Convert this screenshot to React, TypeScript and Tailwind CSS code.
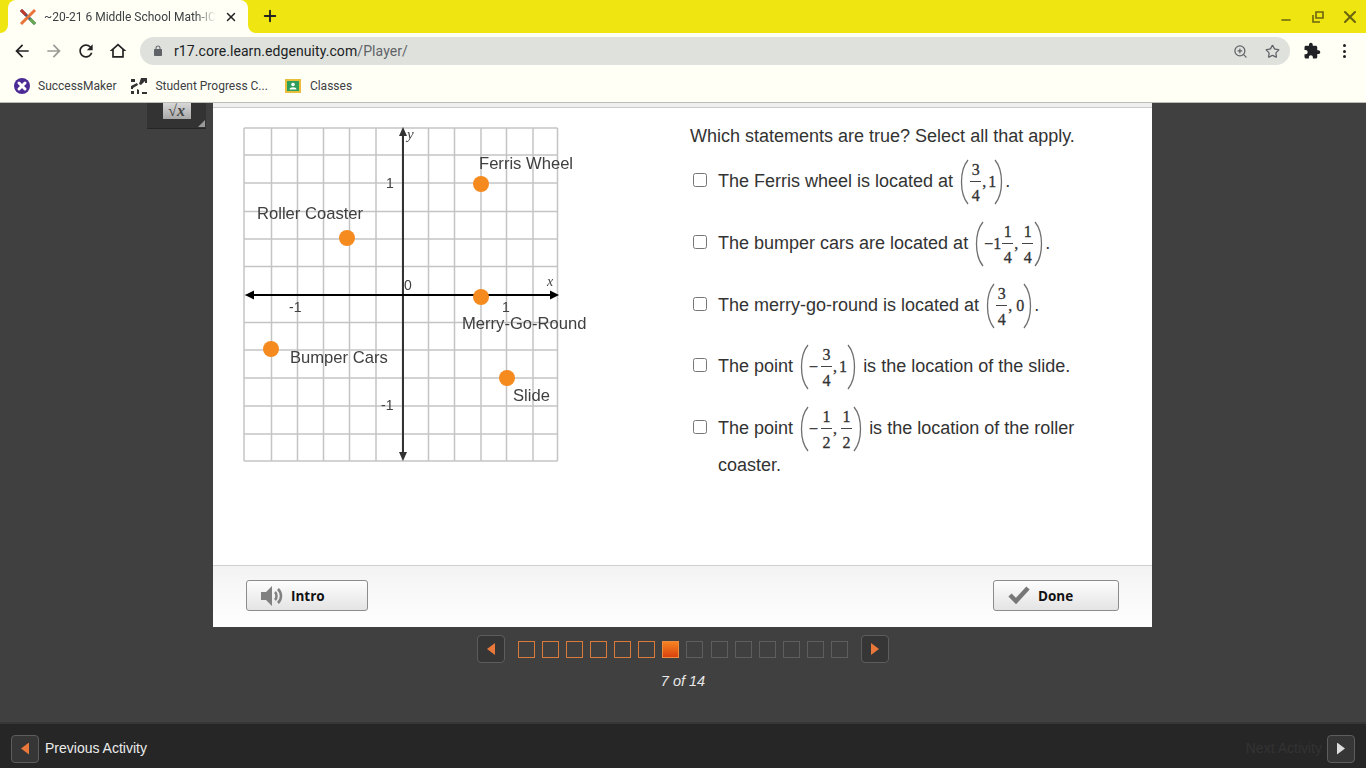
import { Minus, Plus, Star, X, ZoomIn } from 'lucide-react'
import type { ReactNode } from 'react'

const gridX = [244, 271.5, 297.5, 323.5, 349.5, 376, 402.5, 428.5, 454.5, 481, 506.5, 533, 557.5]
const gridY = [128, 155, 183, 211.5, 239, 266.5, 295, 322.5, 350, 378, 406, 434, 461]
const points = [
  [481, 184],
  [347, 238],
  [481, 297],
  [271, 349],
  [507, 378],
]
const labels = [
  { text: 'Ferris Wheel', x: 479, y: 169 },
  { text: 'Roller Coaster', x: 257, y: 219 },
  { text: 'Merry-Go-Round', x: 462, y: 329 },
  { text: 'Bumper Cars', x: 290, y: 363 },
  { text: 'Slide', x: 513, y: 401 },
]
const ticks = [
  { text: '1', x: 386, y: 188 },
  { text: '-1', x: 289, y: 312 },
  { text: '0', x: 404, y: 290 },
  { text: '1', x: 502, y: 312 },
  { text: '-1', x: 381, y: 410 },
]

function Graph() {
  return (
    <svg width="360" height="355" viewBox="235 115 360 355" className="shrink-0 blur-[0.3px]">
      {gridX.map((x) => (
        <line key={x} x1={x} y1="128" x2={x} y2="461" stroke="#c4c4c4" strokeWidth="1.5" />
      ))}
      {gridY.map((y) => (
        <line key={y} x1="244" y1={y} x2="557.5" y2={y} stroke="#c4c4c4" strokeWidth="1.5" />
      ))}
      <line x1="403" y1="132" x2="403" y2="456" stroke="#333" strokeWidth="2" />
      <path d="M403 127l-4 9h8zM403 461l-4-9h8z" fill="#333" />
      <line x1="250" y1="295" x2="554" y2="295" stroke="#000" strokeWidth="2" />
      <path d="M245 295l9-4.5v9zM559 295l-9-4.5v9z" fill="#000" />
      {points.map(([cx, cy]) => (
        <circle key={`${cx}-${cy}`} cx={cx} cy={cy} r="8" fill="#f58a1f" />
      ))}
      {labels.map((l) => (
        <text key={l.text} x={l.x} y={l.y} fontSize="16.6" fill="#404040" fontFamily="'Liberation Sans', sans-serif">
          {l.text}
        </text>
      ))}
      {ticks.map((t) => (
        <text key={`${t.x}-${t.y}`} x={t.x} y={t.y} fontSize="14" fill="#404040" fontFamily="'Liberation Sans', sans-serif">
          {t.text}
        </text>
      ))}
      <text x="547" y="286" fontSize="14" fontStyle="italic" fill="#444" fontFamily="'Liberation Serif', serif">x</text>
      <text x="407" y="139" fontSize="15" fontStyle="italic" fill="#444" fontFamily="'Liberation Serif', serif">y</text>
    </svg>
  )
}

function Paren({ right }: { right?: boolean }) {
  return (
    <svg width="9" height="46" viewBox="0 0 9 46" className={right ? 'shrink-0 -scale-x-100' : 'shrink-0'}>
      <path d="M8 1C3 7 1.5 15 1.5 23S3 39 8 45" fill="none" stroke="#6f6f6f" strokeWidth="1.3" />
    </svg>
  )
}

function Frac({ top, bottom, className }: { top: string; bottom: string; className?: string }) {
  return (
    <span className={`inline-flex w-[13px] flex-col items-center ${className ?? ''}`}>
      <span className="h-[22px] leading-[22px]">{top}</span>
      <span className="h-px w-[11px] bg-[#444]" />
      <span className="h-[23px] leading-[27px]">{bottom}</span>
    </span>
  )
}

function Expr({ children }: { children: ReactNode }) {
  return (
    <span className="ml-[2px] mr-[2px] inline-flex h-[46px] items-center align-middle font-['Liberation_Serif',serif] text-[16px] leading-none text-[#333] [-webkit-text-stroke:0.3px_#333]">
      <Paren />
      {children}
      <Paren right />
    </span>
  )
}

function Row({ children }: { children: ReactNode }) {
  return (
    <div className="mb-[15.75px] flex items-start">
      <input type="checkbox" className="ml-[3px] mr-[11px] mt-[14px] h-[14px] w-[14px] shrink-0" />
      <p className="w-[385px] text-[18px] leading-[27px] text-[#333]">{children}</p>
    </div>
  )
}

function ChromeIcon({ d, className }: { d: string; className?: string }) {
  return (
    <svg viewBox="0 0 24 24" className={className} fill="currentColor">
      <path d={d} />
    </svg>
  )
}

function NavButton({ dir, dim }: { dir: 'left' | 'right'; dim?: boolean }) {
  return (
    <button className="flex h-[28px] w-[28px] shrink-0 items-center justify-center rounded-[4px] border border-[#5d5d5d] bg-[#363636]">
      {dir === 'left' ? (
        <span className={`h-[12px] w-[8px] [clip-path:polygon(100%_0,100%_100%,0_50%)] ${dim ? 'bg-[#ddd]' : 'bg-[#e9783a]'}`} />
      ) : (
        <span className={`h-[12px] w-[8px] [clip-path:polygon(0_0,100%_50%,0_100%)] ${dim ? 'bg-[#ddd]' : 'bg-[#e9783a]'}`} />
      )}
    </button>
  )
}

function PageDot({ index }: { index: number }) {
  if (index === 6) {
    return <span className="h-[17px] w-[17px] shrink-0 border border-[#f08a3c] bg-gradient-to-b from-[#f58220] to-[#d9400f]" />
  }
  if (index < 6) {
    return <span className="h-[17px] w-[17px] shrink-0 border border-[#d9793a]" />
  }
  return <span className="h-[17px] w-[17px] shrink-0 border border-[#5e5e5e]" />
}

export default function App() {
  return (
    <div className="flex h-[768px] w-[1366px] flex-col overflow-hidden bg-[#404040] font-['Liberation_Sans',sans-serif]">
      {/* tab strip */}
      <div className="flex h-[33px] shrink-0 items-end bg-[#eee511] pl-[8px] font-['Roboto',sans-serif]">
        <div className="relative flex h-[33px] w-[240px] items-center rounded-t-[8px] bg-[#fffff6] pl-[11px] pr-[8px]">
          <span className="absolute -left-[8px] bottom-0 h-[8px] w-[8px] bg-[#fffff6]">
            <span className="block h-full w-full rounded-br-[8px] bg-[#eee511]" />
          </span>
          <span className="absolute -right-[8px] bottom-0 h-[8px] w-[8px] bg-[#fffff6]">
            <span className="block h-full w-full rounded-bl-[8px] bg-[#eee511]" />
          </span>
          <svg width="18" height="18" viewBox="0 0 18 18" className="shrink-0">
            <path d="M2 2l14 14" stroke="#2f5d8c" strokeWidth="3" />
            <path d="M16 2L2 16" stroke="#e8743b" strokeWidth="3" />
            <path d="M2 2l5 5" stroke="#c0392b" strokeWidth="3" />
            <path d="M16 16l-5-5" stroke="#6aa84f" strokeWidth="3" />
          </svg>
          <span className="ml-[7px] w-[172px] overflow-hidden whitespace-nowrap text-[12px] text-[#3c4043] [mask-image:linear-gradient(to_right,black_88%,transparent)]">~20-21 6 Middle School Math-IC</span>
          <X className="ml-[8px] h-[14px] w-[14px] shrink-0 text-[#222]" strokeWidth={2.5} />
        </div>
        <Plus className="mb-[8px] ml-[13px] h-[18px] w-[18px] text-[#222]" strokeWidth={2.5} />
        <div className="mb-[6px] ml-auto flex items-center text-[#6b650f]">
          <Minus className="mt-[5px] h-[14px] w-[14px]" strokeWidth={2.5} />
          <svg width="12" height="12" viewBox="0 0 12 12" className="ml-[19px]" fill="none" stroke="currentColor" strokeWidth="1.6">
            <path d="M4 1h7v6H4zM1 4v7h7" />
          </svg>
          <X className="ml-[16px] mr-[6px] h-[20px] w-[20px]" strokeWidth={2.5} />
        </div>
      </div>

      {/* toolbar */}
      <div className="flex h-[37px] shrink-0 items-center bg-[#fffff6] pb-[1px] pl-[6px] font-['Roboto',sans-serif] text-[#222]">
        <div className="flex w-[32px] justify-center">
          <ChromeIcon className="h-[20px] w-[20px]" d="M20 11H7.83l5.59-5.59L12 4l-8 8 8 8 1.41-1.41L7.83 13H20v-2z" />
        </div>
        <div className="flex w-[32px] justify-center text-[#9a9a96]">
          <ChromeIcon className="h-[20px] w-[20px]" d="M12 4l-1.41 1.41L16.17 11H4v2h12.17l-5.58 5.59L12 20l8-8z" />
        </div>
        <div className="flex w-[32px] justify-center">
          <ChromeIcon className="h-[20px] w-[20px]" d="M17.65 6.35C16.2 4.9 14.21 4 12 4c-4.42 0-7.99 3.58-7.99 8s3.57 8 7.99 8c3.73 0 6.84-2.55 7.73-6h-2.08c-.82 2.33-3.04 4-5.65 4-3.31 0-6-2.69-6-6s2.69-6 6-6c1.66 0 3.14.69 4.22 1.78L13 11h7V4l-2.35 2.35z" />
        </div>
        <div className="flex w-[32px] justify-center">
          <ChromeIcon className="h-[20px] w-[20px]" d="M12 3L2 12h3v8h14v-8h3L12 3zm0 2.69l5 4.5V18H7v-7.81l5-4.5z" />
        </div>
        <div className="ml-[6px] flex h-[28px] w-[1150px] items-center rounded-full bg-[#dfe1dc] pl-[12px] pr-[10px]">
          <ChromeIcon className="h-[12px] w-[12px] text-[#5f6368]" d="M18 8h-1V6c0-2.76-2.24-5-5-5S7 3.24 7 6v2H6c-1.1 0-2 .9-2 2v10c0 1.1.9 2 2 2h12c1.1 0 2-.9 2-2V10c0-1.1-.9-2-2-2zM9 6c0-1.66 1.34-3 3-3s3 1.34 3 3v2H9V6z" />
          <span className="ml-[10px] text-[14px] tracking-[0.08px] text-[#202124]">
            r17.core.learn.edgenuity.com<span className="text-[#5f6368]">/Player/</span>
          </span>
          <ZoomIn className="ml-auto h-[15px] w-[15px] text-[#5f6368]" />
          <Star className="ml-[17px] h-[15px] w-[15px] text-[#5f6368]" />
        </div>
        <ChromeIcon className="ml-[13px] h-[18px] w-[18px] text-[#202124]" d="M20.5 11H19V7c0-1.1-.9-2-2-2h-4V3.5C13 2.12 11.88 1 10.5 1S8 2.12 8 3.5V5H4c-1.1 0-1.99.9-1.99 2v3.8H3.5c1.49 0 2.7 1.21 2.7 2.7s-1.21 2.7-2.7 2.7H2V20c0 1.1.9 2 2 2h3.8v-1.5c0-1.49 1.21-2.7 2.7-2.7 1.49 0 2.7 1.21 2.7 2.7V22H17c1.1 0 2-.9 2-2v-4h1.5c1.38 0 2.5-1.12 2.5-2.5S21.88 11 20.5 11z" />
        <div className="ml-[22px] flex flex-col gap-[2.5px]">
          <span className="h-[3px] w-[3px] rounded-full bg-[#202124]" />
          <span className="h-[3px] w-[3px] rounded-full bg-[#202124]" />
          <span className="h-[3px] w-[3px] rounded-full bg-[#202124]" />
        </div>
      </div>

      {/* bookmarks */}
      <div className="flex h-[33px] shrink-0 items-center border-b border-[#bdbdb8] bg-[#fffff6] pl-[14px] font-['Roboto',sans-serif] text-[12px] text-[#3c4043]">
        <svg width="16" height="16" viewBox="0 0 16 16" className="shrink-0">
          <circle cx="8" cy="8" r="8" fill="#4b2a96" />
          <path d="M5 5l6 6M11 5l-6 6" stroke="#fff" strokeWidth="3" strokeLinecap="round" />
        </svg>
        <span className="ml-[8px]">SuccessMaker</span>
        <svg width="16" height="16" viewBox="0 0 16 16" className="ml-[15px] shrink-0" fill="#333">
          <path d="M0 1h4v3H0zM10 0h6v5h-2V3l-4 4-2-1zM0 8l6-3 1 2-5 3v1H0zM0 13h3v3H0zM6 11l2 1v4H6zM11 14h5v2h-5z" />
        </svg>
        <span className="ml-[8px]">Student Progress C...</span>
        <svg width="16" height="16" viewBox="0 0 16 16" className="ml-[17px] shrink-0">
          <rect width="16" height="14" y="1" fill="#e8bf3a" />
          <rect width="12" height="10" x="2" y="3" fill="#2e9e5b" />
          <circle cx="8" cy="6.5" r="1.8" fill="#fff" />
          <path d="M4.5 11.5c0-3 7-3 7 0z" fill="#fff" />
        </svg>
        <span className="ml-[9px]">Classes</span>
      </div>

      {/* player */}
      <div className="relative flex min-h-0 flex-1 flex-col items-center">
        {/* calculator tool */}
        <div className="absolute left-[147px] top-0 flex h-[26px] w-[59px] justify-center border-b border-[#262626] bg-[#333]">
          <div className="flex h-[16px] w-[28px] items-center justify-center bg-gradient-to-b from-[#d8d8d8] to-[#a8a8a8] font-['Liberation_Serif',serif] text-[16px] font-bold italic leading-none text-[#444]">
            √x
          </div>
          <span className="absolute bottom-[1px] right-[1px] h-[7px] w-[7px] bg-[#999] [clip-path:polygon(100%_0,100%_100%,0_100%)]" />
        </div>

        <div className="ml-[213px] flex h-[524px] w-[939px] shrink-0 flex-col self-start bg-white">
          <div className="h-[5px] shrink-0 border-b border-[#c9c9c9] bg-[#efefef]" />
          <div className="flex min-h-0 flex-1 pl-[22px] pt-[7px]">
            <Graph />
            <div className="ml-[95px] flex flex-col pt-[3px]">
              <p className="mb-[5px] text-[18px] leading-[36px] text-[#333]">Which statements are true? Select all that apply.</p>
              <Row>
                The Ferris wheel is located at{' '}
                <Expr>
                  <Frac top="3" bottom="4" />
                  <span>,</span>
                  <span className="-mr-[2px] ml-[2px]">1</span>
                </Expr>
                .
              </Row>
              <Row>
                The bumper cars are located at{' '}
                <Expr>
                  <span>−1</span>
                  <Frac top="1" bottom="4" />
                  <span>,</span>
                  <Frac top="1" bottom="4" className="ml-[3px]" />
                </Expr>
                .
              </Row>
              <Row>
                The merry-go-round is located at{' '}
                <Expr>
                  <Frac top="3" bottom="4" />
                  <span>,</span>
                  <span className="-mr-[1px] ml-[4px]">0</span>
                </Expr>
                .
              </Row>
              <Row>
                The point{' '}
                <Expr>
                  <span>−</span>
                  <Frac top="3" bottom="4" className="ml-[2px]" />
                  <span>,</span>
                  <span className="ml-[2px]">1</span>
                </Expr>{' '}
                is the location of the slide.
              </Row>
              <Row>
                The point{' '}
                <Expr>
                  <span>−</span>
                  <Frac top="1" bottom="2" className="ml-[2px]" />
                  <span>,</span>
                  <Frac top="1" bottom="2" className="ml-[3px]" />
                </Expr>{' '}
                is the location of the roller coaster.
              </Row>
            </div>
          </div>
          <div className="flex h-[62px] shrink-0 items-start justify-between border-t border-[#d0d0d0] bg-gradient-to-b from-[#f3f3f3] to-white px-[33px] pt-[14px] font-['Open_Sans',sans-serif]">
            <button className="flex h-[31px] w-[122px] items-center rounded-[3px] border border-[#8c8c8c] bg-gradient-to-b from-[#fdfdfd] to-[#e4e4e4] pl-[13px] pt-[2px] text-[13.5px] font-bold text-[#111]">
              <svg width="24" height="24" viewBox="0 0 24 24" className="-mt-[2px] shrink-0" fill="none">
                <path d="M1 8h5l6-6v20l-6-6H1z" fill="#808080" />
                <path d="M15 8c2 2 2 6 0 8M18 5c4 4 4 10 0 14" stroke="#808080" strokeWidth="2.5" />
              </svg>
              <span className="ml-[7px]">Intro</span>
            </button>
            <button className="flex h-[31px] w-[126px] items-center rounded-[3px] border border-[#8c8c8c] bg-gradient-to-b from-[#fdfdfd] to-[#e4e4e4] pl-[14px] pt-[2px] text-[13.5px] font-bold text-[#111]">
              <svg width="22" height="18" viewBox="0 0 22 18" className="-mt-[4px] shrink-0" fill="none">
                <path d="M2 9l6 6L20 2" stroke="#777" strokeWidth="4.5" />
              </svg>
              <span className="ml-[8px]">Done</span>
            </button>
          </div>
        </div>

        {/* page dots */}
        <div className="mt-[8px] flex w-[412px] items-center">
          <NavButton dir="left" />
          <div className="mx-[13px] flex flex-1 justify-between">
            {Array.from({ length: 14 }, (_, i) => (
              <PageDot key={i} index={i} />
            ))}
          </div>
          <NavButton dir="right" />
        </div>
        <p className="mt-[9px] text-[14.5px] italic leading-[18px] text-[#e8e8e8]">7 of 14</p>
      </div>

      {/* activity bar */}
      <div className="flex h-[46px] shrink-0 items-center justify-between border-t-2 border-[#363636] bg-[#262626] px-[11px] pt-[5px] text-[14px]">
        <div className="flex items-center">
          <NavButton dir="left" />
          <span className="ml-[6px] text-[#ececec]">Previous Activity</span>
        </div>
        <div className="flex items-center">
          <span className="mr-[5px] text-[#333]">Next Activity</span>
          <NavButton dir="right" dim />
        </div>
      </div>
    </div>
  )
}
